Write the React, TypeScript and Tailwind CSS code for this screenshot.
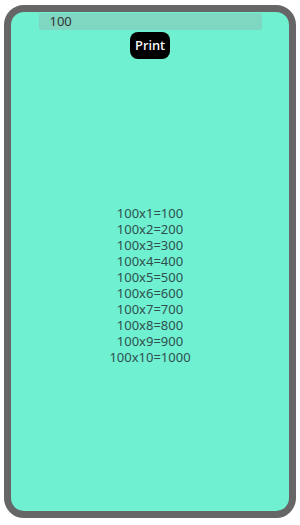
import { useState } from "react";

export default function App() {
  const [value, setValue] = useState("100");
  const n = Number(value) || 0;
  const rows = Array.from({ length: 10 }, (_, i) => `${n}x${i + 1}=${n * (i + 1)}`);

  return (
    <div className="h-[525px] w-[300px] bg-white pl-[4px] pr-[4px] pt-[5px] pb-[7px] font-['Noto_Sans',sans-serif]">
      <div className="flex h-full w-full flex-col items-center rounded-[20px] border-[7px] border-[#666666] bg-[#6ff0d0] pt-[1px]">
        <input
          value={value}
          onChange={(e) => setValue(e.target.value)}
          className="h-[17px] w-[223px] rounded-[3px] bg-[#7fd6c1] px-[11px] text-[13px] leading-[17px] text-[#333] outline-none"
        />
        <button className="mt-[2px] h-[27px] w-[40px] rounded-[8px] bg-black text-[13px] font-medium text-white">
          Print
        </button>
        <div className="flex flex-1 flex-col items-center justify-center text-[13px] leading-[16px] text-[#2f4f4f]">
          {rows.map((r) => (
            <div key={r}>{r}</div>
          ))}
        </div>
      </div>
    </div>
  );
}
